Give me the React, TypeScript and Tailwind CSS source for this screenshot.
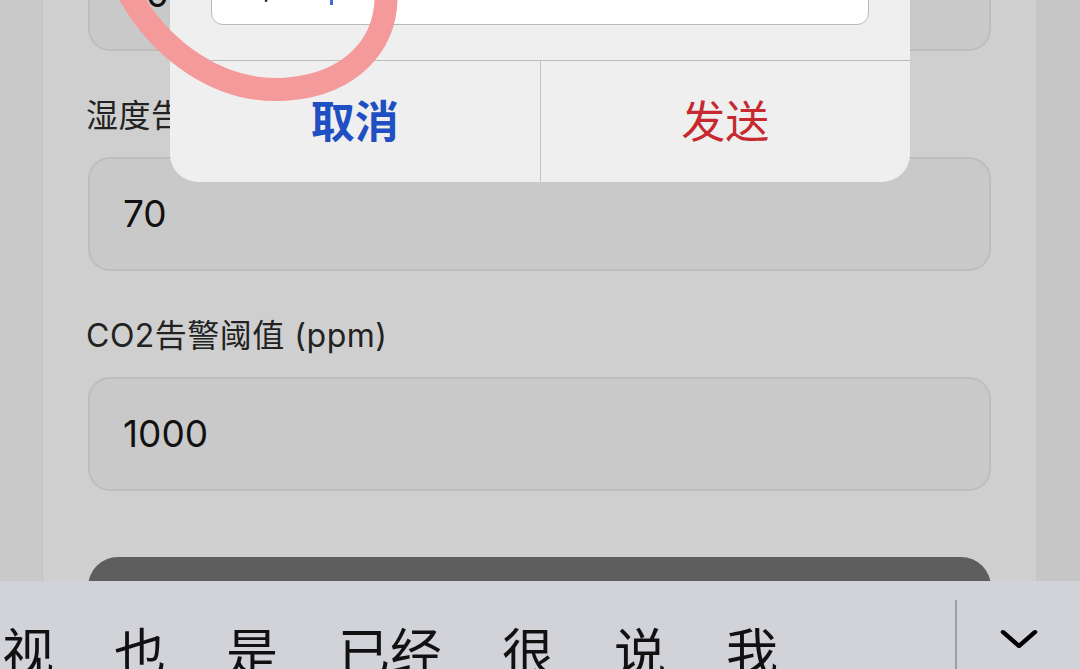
import { ChevronDown } from "lucide-react"

const font = { fontFamily: '"Inter", "Noto Sans CJK SC", sans-serif' }

function Field({ value, className = "" }: { value: string; className?: string }) {
  return (
    <div
      className={`h-[114px] rounded-[22px] border-2 border-[#bdbdbd] bg-[#c9c9c9] pl-[33px] flex items-center text-[37px] text-[#111] ${className}`}
    >
      {value}
    </div>
  )
}

function Label({ children }: { children: React.ReactNode }) {
  return <div className="h-[40px] leading-[40px] text-[32px] tracking-[0.5px] text-[#222] -ml-[2px]">{children}</div>
}

export default function App() {
  return (
    <div className="relative w-[1080px] h-[669px] overflow-hidden bg-[#c9c9c9]" style={font}>
      {/* page behind the modal */}
      <div className="flex h-full">
        <div className="w-[43px] bg-[#c9c9c9] border-r border-[#c2c2c2]" />
        <div className="flex-1 bg-[#cfcfcf] px-[45px] flex flex-col">
          <Field value="30" className="-mt-[63px]" />
          <div className="mt-[45px] mb-[21px]">
            <Label>湿度告警阈值 (%)</Label>
          </div>
          <Field value="70" />
          <div className="mt-[45px] mb-[21px]">
            <Label>CO2告警阈值 (ppm)</Label>
          </div>
          <Field value="1000" />
          <div className="mt-[66px] h-[80px] rounded-t-[30px] bg-[#5e5e5e]" />
        </div>
        <div className="w-[44px] bg-[#c6c6c6]" />
      </div>

      {/* alert dialog */}
      <div className="absolute left-[170px] top-[-80px] w-[740px] rounded-[28px] bg-[#efefef] pt-[25px]">
        <div className="mx-[41px] h-[80px] rounded-[12px] border border-[#b9b9b9] bg-white relative overflow-hidden">
          <div className="absolute left-[20px] bottom-[23px] flex items-end text-[32px] leading-none text-[#111]">
            <span>[3,1]</span>
            <span className="ml-[36px] -mb-[4px] w-[3px] h-[38px] bg-[#3a6fd8]" />
          </div>
        </div>
        <div className="mt-[35px] flex border-t border-[#bcbcbc] h-[122px]">
          <div className="flex-1 flex items-center justify-center text-[44px] font-bold text-[#1f4fc2]">取消</div>
          <div className="w-px bg-[#c4c4c4]" />
          <div className="flex-1 flex items-center justify-center text-[44px] text-[#c62a30]">发送</div>
        </div>
      </div>

      {/* hand-drawn annotation */}
      <svg className="absolute left-0 top-0 pointer-events-none" width="420" height="120" viewBox="0 0 420 120">
        <path
          d="M128 -8 C160 50 220 95 288 89 C350 84 388 45 386 -8"
          fill="none"
          stroke="#f59a9a"
          strokeWidth="23"
          strokeLinecap="round"
        />
      </svg>

      {/* keyboard candidate bar */}
      <div className="absolute left-0 right-0 bottom-0 h-[88px] bg-[#d2d3d8] flex">
        <div className="flex-1 flex gap-[60px] pl-[2px] pt-[47px] text-[52px] leading-none text-[#111] overflow-hidden whitespace-nowrap">
          <span>视</span>
          <span>也</span>
          <span>是</span>
          <span>已经</span>
          <span>很</span>
          <span>说</span>
          <span>我</span>
        </div>
        <div className="w-[2px] mt-[19px] bg-[#9e9ea2]" />
        <div className="w-[123px] flex items-start justify-center pt-[30px]">
          <ChevronDown className="w-[64px] h-[56px] text-black" strokeWidth={1.7} preserveAspectRatio="none" />
        </div>
      </div>
    </div>
  )
}
